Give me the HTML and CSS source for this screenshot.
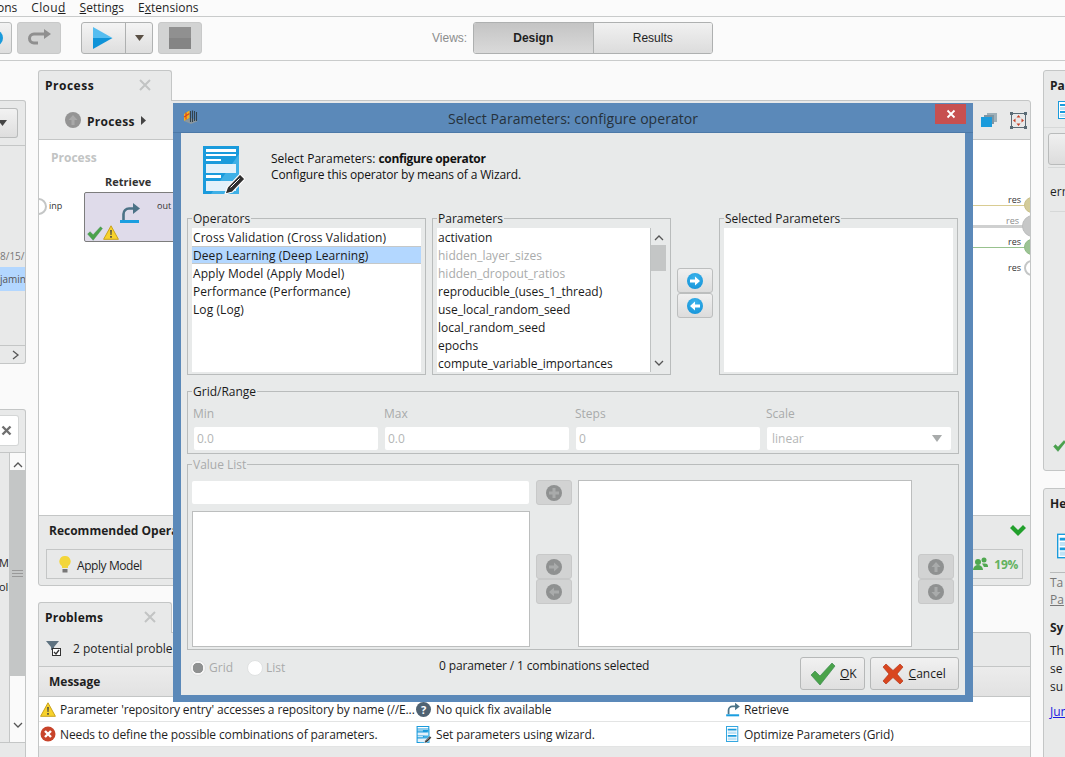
FILE: index.html
```html
<!DOCTYPE html>
<html lang="en">
<head>
<meta charset="utf-8">
<title>Select Parameters: configure operator</title>
<link rel="stylesheet" href="styles.css">
</head>
<body>
<svg class="defs" aria-hidden="true">
  <symbol id="i-retrieve" viewBox="0 0 20 22"><path d="M3.5 18V12a5.500 5.500 0 0 1 5.500-5.500H14" fill="none" stroke="#4b7286" stroke-width="2.600"/><path d="M13 1l7 5.500-7 5.500z" fill="#4b7286"/><rect x="0" y="18" width="19" height="3" fill="#1b9ee0"/></symbol>
  <symbol id="i-doc" viewBox="0 0 42 48"><rect width="36" height="48" fill="#1a9bdc"/><path d="M36 8L8 48h28z" fill="#3fb0e6"/><path d="M3 3h30v3H3zM3 8h30v2H3zM3 13h15v2H3zM3 29h15v3H3z" fill="#fff"/><path d="M3 18h30v9H3zM3 35h30v10H3z" fill="#e3f1fa"/><path d="M22 48l2.500-7L37 28l5 5-12.500 13z" fill="#2f2f2f" stroke="#fff" stroke-width="1.200"/><path d="M27.500 41.500l9-9" stroke="#fff" stroke-width="1"/></symbol>
  <symbol id="i-opt" viewBox="0 0 16 18"><rect x=".5" y=".5" width="13" height="17" fill="#fff" stroke="#1a9bdc"/><path d="M2 3h10v2H2zM2 10h10v2H2z" fill="#1a9bdc"/><path d="M2 6h10v3H2zM2 13h10v3H2z" fill="#bfe2f5"/></symbol>
  <symbol id="i-warn" viewBox="0 0 16 15"><path d="M8 .8L15.400 14.300H.6z" fill="#f7d22c" stroke="#c9a21c"/><path d="M7.200 5h1.600l-.3 5h-1zM7.200 11h1.600v1.800H7.200z" fill="#444"/></symbol>
  <symbol id="i-err" viewBox="0 0 16 16"><circle cx="8" cy="8" r="7.500" fill="#c8432a"/><path d="M5 5l6 6M11 5l-6 6" stroke="#fff" stroke-width="2.400"/></symbol>
  <symbol id="i-check" viewBox="0 0 26 24"><path d="M1 13l4-4 5 5L22 1l3 3-15 19z" fill="#4aa34a" stroke="#3c8a50" stroke-width=".7"/></symbol>
  <symbol id="i-cross" viewBox="0 0 24 24"><path d="M2 5l3-3 7 6.500L19 2l3 3-6 7 6 7-3 3-7-6.500L5 22l-3-3 6-7z" fill="#d9461f" stroke="#b5371a" stroke-width=".7"/></symbol>
  <symbol id="i-right" viewBox="0 0 16 16"><path d="M3 6.500h5V3.500l5 4.500-5 4.500V9.500H3z" fill="currentColor"/></symbol>
  <symbol id="i-left" viewBox="0 0 16 16"><path d="M13 6.500H8V3.500L3 8l5 4.500V9.500h5z" fill="currentColor"/></symbol>
  <symbol id="i-up" viewBox="0 0 16 16"><path d="M6.500 13V8H3.500L8 3l4.500 5H9.500v5z" fill="currentColor"/></symbol>
  <symbol id="i-down" viewBox="0 0 16 16"><path d="M6.500 3v5H3.500L8 13l4.500-5H9.500V3z" fill="currentColor"/></symbol>
  <symbol id="i-plus" viewBox="0 0 16 16"><path d="M6.500 3h3v3.500H13v3H9.500V13h-3V9.500H3v-3h3.500z" fill="currentColor"/></symbol>
</svg>

<div class="app">
  <nav class="menu">
    <span class="menu-first">ons</span>
    <span class="menu-cloud">Clou<u>d</u></span>
    <span class="menu-settings"><u>S</u>ettings</span>
    <span>E<u>x</u>tensions</span>
  </nav>

  <header class="toolbar">
    <div class="tbtn tbtn-cut"><span class="cut-dot"></span></div>
    <div class="tbtn tbtn-off">
      <svg width="24" height="18" viewBox="0 0 24 18"><path d="M21 5H7a4.500 4.500 0 0 0 0 9h4" fill="none" stroke="#8f8f8f" stroke-width="3"/><path d="M17 0l7 5-7 5z" fill="#8f8f8f"/></svg>
    </div>
    <div class="play">
      <div class="play-main">
        <svg width="20" height="22" viewBox="0 0 20 22"><path d="M0 0l19.500 11H0z" fill="#55bdf0"/><path d="M0 11h19.500L0 22z" fill="#0f93d8"/></svg>
      </div>
      <div class="play-more"><svg width="9" height="6" viewBox="0 0 9 6"><path d="M0 0h9L4.500 6z" fill="#5a5045"/></svg></div>
    </div>
    <div class="tbtn tbtn-off"><span class="stop"></span></div>
    <span class="views-label">Views:</span>
    <div class="seg">
      <span class="seg-item seg-active">Design</span>
      <span class="seg-item">Results</span>
    </div>
  </header>

  <main class="workspace">
    <section class="col-left">
      <div class="lp lp-top">
        <div class="lp-combo-row"><div class="lp-combo"><svg width="9" height="6" viewBox="0 0 9 6"><path d="M0 0h9L4.500 6z" fill="#444"/></svg></div></div>
        <div class="lp-tree">
          <div class="lp-date">8/15/1</div>
          <div class="lp-sel">jamin</div>
        </div>
        <div class="lp-hscroll"><svg width="8" height="10" viewBox="0 0 8 10"><path d="M1 1l5 4-5 4" fill="none" stroke="#555" stroke-width="1.300"/></svg></div>
      </div>
      <div class="lp lp-bottom">
        <div class="lp-search-row"><div class="lp-search"><svg width="11" height="11" viewBox="0 0 11 11"><path d="M1.500 1.500l8 8M9.500 1.500l-8 8" stroke="#6f6f6f" stroke-width="2.400"/></svg></div></div>
        <div class="lp-ops">
          <div class="lp-ops-text"><div class="lp-m">M)</div><div class="lp-olu">olu</div></div>
          <div class="lp-vscroll">
            <svg class="lp-arrow" width="10" height="7" viewBox="0 0 10 7"><path d="M1 6l4-4 4 4" fill="none" stroke="#555" stroke-width="1.300"/></svg>
            <div class="lp-thumb"><span class="lp-grip"></span></div>
            <svg class="lp-arrow" width="10" height="7" viewBox="0 0 10 7"><path d="M1 1l4 4 4-4" fill="none" stroke="#555" stroke-width="1.300"/></svg>
          </div>
        </div>
      </div>
    </section>

    <section class="col-center">
      <div class="tab"><span class="tab-title">Process</span><svg class="tab-x" width="12" height="12" viewBox="0 0 12 12"><path d="M1 1l10 10M11 1L1 11" stroke="#c2c4c4" stroke-width="2"/></svg></div>
      <div class="panel process">
        <div class="crumbs">
          <span class="crumb-up"><svg width="16" height="16"><use href="#i-up"/></svg></span>
          <span class="crumb-name">Process</span>
          <svg width="5" height="9" viewBox="0 0 5 9"><path d="M0 0l5 4.500L0 9z" fill="#444"/></svg>
          <span class="crumb-tools">
            <svg width="18" height="16" viewBox="0 0 18 16"><rect x="7" y="1" width="10" height="9" fill="#9fb0b8"/><rect x="4" y="3" width="10" height="9" fill="#7d95a3"/><rect x="1" y="5" width="11" height="10" fill="#1a9bdc"/></svg>
            <svg width="17" height="17" viewBox="0 0 17 17"><rect x="1.500" y="1.500" width="14" height="14" fill="none" stroke="#5a6b75"/><path d="M0 0h3v3H0zM14 0h3v3h-3zM0 14h3v3H0zM14 14h3v3h-3z" fill="#5a6b75"/><path d="M8.500 3l2 2.500h-4zM8.500 14l2-2.500h-4zM3 8.500L5.500 6.500v4zM14 8.500l-2.500-2v4z" fill="#c8432a"/></svg>
          </span>
        </div>
        <div class="canvas">
          <span class="cv-title">Process</span>
          <span class="port port-in"></span>
          <span class="cv-label cv-inp">inp</span>
          <span class="op-name">Retrieve</span>
          <div class="op">
            <svg class="op-icon" width="20" height="22"><use href="#i-retrieve"/></svg>
            <span class="op-out">out</span>
            <svg class="op-ok" width="16" height="15"><use href="#i-check"/></svg>
            <svg class="op-warn" width="16" height="15"><use href="#i-warn"/></svg>
          </div>
          <span class="wire wire-y"></span>
          <span class="wire wire-g"></span>
          <span class="wire wire-n"></span>
          <span class="sink sink-y"></span>
          <span class="sink sink-g"></span>
          <span class="sink sink-n"></span>
          <span class="sink sink-w"></span>
          <span class="cv-label res res-1">res</span>
          <span class="cv-label res res-2">res</span>
          <span class="cv-label res res-3">res</span>
          <span class="cv-label res res-4">res</span>
        </div>
        <div class="reco">
          <div class="reco-head"><span class="reco-title">Recommended Operators</span>
            <svg width="16" height="11" viewBox="0 0 16 11"><path d="M0 3l3-3 5 5 5-5 3 3-8 8z" fill="#22a02c"/></svg>
          </div>
          <div class="reco-bar">
            <svg width="12" height="17" viewBox="0 0 12 17"><path d="M6 0a5.500 5.500 0 0 1 3 10.200V12H3v-1.800A5.500 5.500 0 0 1 6 0z" fill="#f3d63a"/><rect x="3.500" y="13" width="5" height="3.500" fill="#777"/></svg>
            <span class="reco-op">Apply Model</span>
            <span class="reco-pct">
              <svg width="15" height="14" viewBox="0 0 15 14"><circle cx="5" cy="5" r="3" fill="#4fa84f"/><path d="M0 13a5 5 0 0 1 10 0z" fill="#4fa84f"/><circle cx="11" cy="3" r="2.500" fill="#4fa84f"/><path d="M9 6.500h3a3 3 0 0 1 3 3v.5h-4z" fill="#4fa84f"/></svg>
              <b>19%</b>
            </span>
          </div>
        </div>
      </div>

      <div class="tab tab-problems"><span class="tab-title">Problems</span><svg class="tab-x" width="12" height="12" viewBox="0 0 12 12"><path d="M1 1l10 10M11 1L1 11" stroke="#c2c4c4" stroke-width="2"/></svg></div>
      <div class="panel problems">
        <div class="prob-bar">
          <svg width="15" height="15" viewBox="0 0 15 15"><path d="M0 0h13L8 6v3H5V6z" fill="#5e7280"/><rect x="6.500" y="7.500" width="8" height="7" fill="#fff" stroke="#333"/><path d="M8 11l2 2 3-4" fill="none" stroke="#333" stroke-width="1.300"/></svg>
          <span>2 potential problems found</span>
        </div>
        <div class="prob-head"><b>Message</b></div>
        <div class="prob-row">
          <div class="cell cell-msg"><svg width="16" height="15"><use href="#i-warn"/></svg><span>Parameter 'repository entry' accesses a repository by name (//E...</span></div>
          <div class="cell cell-fix"><span class="help">?</span><span>No quick fix available</span></div>
          <div class="cell cell-op"><svg width="14" height="15"><use href="#i-retrieve"/></svg><span>Retrieve</span></div>
        </div>
        <div class="prob-row">
          <div class="cell cell-msg"><svg width="16" height="16"><use href="#i-err"/></svg><span>Needs to define the possible combinations of parameters.</span></div>
          <div class="cell cell-fix"><svg width="16" height="17"><use href="#i-doc"/></svg><span>Set parameters using wizard.</span></div>
          <div class="cell cell-op"><svg width="14" height="16"><use href="#i-opt"/></svg><span>Optimize Parameters (Grid)</span></div>
        </div>
      </div>
    </section>

    <section class="col-right">
      <div class="rp rp-top">
        <div class="rp-title">Pa</div>
        <div class="rp-iconrow"><svg width="18" height="18"><use href="#i-opt"/></svg></div>
        <div class="rp-btnrow"><div class="rp-btn"></div></div>
        <div class="rp-err">err</div>
        <div class="rp-fill"></div>
        <svg class="rp-check" width="13" height="12"><use href="#i-check"/></svg>
      </div>
      <div class="rp rp-bottom">
        <div class="rp-title">He</div>
        <div class="rp-iconrow rp-iconrow2"><svg width="22" height="26"><use href="#i-opt"/></svg></div>
        <div class="rp-tags"><div>Ta</div><div class="rp-under">Pa</div></div>
        <div class="rp-syn">Sy</div>
        <div class="rp-line">Th</div>
        <div class="rp-line">se</div>
        <div class="rp-line">su</div>
        <a class="rp-link">Jun</a>
      </div>
    </section>
  </main>

  <div class="dialog">
    <div class="dlg-title">
      <svg class="dlg-logo" width="16" height="16" viewBox="0 0 16 16"><path d="M8 9l7 3-7 3-7-3z" fill="#8a97a0"/><path d="M7.500 2v11M9.500 1.500v11.500M11.500 2v10M13.500 3v9" stroke="#33424c" stroke-width="1.100"/><path d="M1 5l5.500-3.500V9L1 12z" fill="#f2b21e"/><path d="M1 8l5.500-3.500M3 3.500V10.500" stroke="#d9431e" stroke-width="1.100"/></svg>
      <span class="dlg-caption">Select Parameters: configure operator</span>
      <span class="dlg-close"><svg width="10" height="10" viewBox="0 0 10 10"><path d="M1.500 1.500l7 7M8.500 1.500l-7 7" stroke="#fff" stroke-width="1.800"/></svg></span>
    </div>
    <div class="dlg-body">
      <div class="dlg-head">
        <svg width="42" height="48"><use href="#i-doc"/></svg>
        <div class="dlg-intro">
          <div>Select Parameters: <b>configure operator</b></div>
          <div class="dlg-intro-2">Configure this operator by means of a Wizard.</div>
        </div>
      </div>

      <div class="pick">
        <fieldset class="box">
          <legend>Operators</legend>
          <ul class="list list-ops">
            <li>Cross Validation (Cross Validation)</li>
            <li class="sel">Deep Learning (Deep Learning)</li>
            <li>Apply Model (Apply Model)</li>
            <li>Performance (Performance)</li>
            <li>Log (Log)</li>
          </ul>
        </fieldset>
        <fieldset class="box">
          <legend>Parameters</legend>
          <div class="list-scroll">
            <ul class="list list-params">
              <li>activation</li>
              <li class="off">hidden_layer_sizes</li>
              <li class="off">hidden_dropout_ratios</li>
              <li>reproducible_(uses_1_thread)</li>
              <li>use_local_random_seed</li>
              <li>local_random_seed</li>
              <li>epochs</li>
              <li>compute_variable_importances</li>
            </ul>
            <div class="vscroll">
              <svg width="10" height="7" viewBox="0 0 10 7"><path d="M1 6l4-4 4 4" fill="none" stroke="#555" stroke-width="1.300"/></svg>
              <div class="vtrack"><span class="vthumb"></span></div>
              <svg width="10" height="7" viewBox="0 0 10 7"><path d="M1 1l4 4 4-4" fill="none" stroke="#555" stroke-width="1.300"/></svg>
            </div>
          </div>
        </fieldset>
        <div class="move">
          <button class="rbtn" type="button"><span class="dot dot-on"><svg width="16" height="16"><use href="#i-right"/></svg></span></button>
          <button class="rbtn" type="button"><span class="dot dot-on"><svg width="16" height="16"><use href="#i-left"/></svg></span></button>
        </div>
        <fieldset class="box">
          <legend>Selected Parameters</legend>
          <ul class="list"></ul>
        </fieldset>
      </div>

      <fieldset class="box box-range">
        <legend>Grid/Range</legend>
        <div class="range">
          <label class="fld">Min<span class="inp">0.0</span></label>
          <label class="fld">Max<span class="inp">0.0</span></label>
          <label class="fld">Steps<span class="inp">0</span></label>
          <label class="fld">Scale<span class="inp inp-select">linear<svg width="10" height="7" viewBox="0 0 10 7"><path d="M0 0h10L5 7z" fill="#a8abab"/></svg></span></label>
        </div>
      </fieldset>

      <fieldset class="box box-values">
        <legend class="legend-off">Value List</legend>
        <div class="values">
          <div class="val-left"><span class="inp inp-wide"></span><div class="val-list val-list-left"></div></div>
          <div class="val-btns">
            <button class="rbtn rbtn-off" type="button"><span class="dot"><svg width="16" height="16"><use href="#i-plus"/></svg></span></button>
            <div class="val-pair val-pair-1">
              <button class="rbtn rbtn-off" type="button"><span class="dot"><svg width="16" height="16"><use href="#i-right"/></svg></span></button>
              <button class="rbtn rbtn-off" type="button"><span class="dot"><svg width="16" height="16"><use href="#i-left"/></svg></span></button>
            </div>
          </div>
          <div class="val-list"></div>
          <div class="val-btns val-btns-2">
            <button class="rbtn rbtn-off" type="button"><span class="dot"><svg width="16" height="16"><use href="#i-up"/></svg></span></button>
            <button class="rbtn rbtn-off" type="button"><span class="dot"><svg width="16" height="16"><use href="#i-down"/></svg></span></button>
          </div>
        </div>
      </fieldset>

      <div class="dlg-foot">
        <div class="radios">
          <span class="radio radio-on"></span><span class="radio-text">Grid</span>
          <span class="radio"></span><span class="radio-text">List</span>
        </div>
        <div class="count">0 parameter / 1 combinations selected</div>
        <button class="act act-ok" type="button"><svg width="26" height="24"><use href="#i-check"/></svg><span><u>O</u>K</span></button>
        <button class="act act-cancel" type="button"><svg width="24" height="24"><use href="#i-cross"/></svg><span><u>C</u>ancel</span></button>
      </div>
    </div>
  </div>
</div>
</body>
</html>
```

FILE: styles.css
```css
* { box-sizing: border-box; }
html, body { margin: 0; padding: 0; }
body {
  font-family: "Open Sans", "Liberation Sans", sans-serif;
  font-size: 12px;
  color: #1f1f1f;
  background: #fafafa;
}
svg { flex: none; }
.defs { position: absolute; width: 0; height: 0; }
.app {
  position: relative;
  width: 1065px;
  height: 757px;
  overflow: hidden;
  display: flex;
  flex-direction: column;
  background: #fafafa;
}
ul { list-style: none; margin: 0; padding: 0; }

/* menu */
.menu {
  height: 17px;
  flex: none;
  display: flex;
  gap: 14px;
  line-height: 16px;
  background: #fbfbfb;
  border-bottom: 1px solid #c9cbcb;
}
.menu-first { margin-left: -3px; }
.menu-cloud { letter-spacing: .35px; }

/* toolbar */
.toolbar {
  height: 44px;
  flex: none;
  display: flex;
  align-items: flex-start;
  padding-top: 5px;
  background: #fbfbfb;
  border-bottom: 1px solid #c9cbcb;
}
.tbtn {
  width: 44px;
  height: 32px;
  margin-right: 5px;
  display: flex;
  align-items: center;
  justify-content: center;
  border-radius: 3px;
}
.tbtn-cut {
  width: 42px;
  margin-left: -30px;
  border: 1px solid #b9bbbb;
  background: linear-gradient(#f2f2f2, #dedede);
  justify-content: flex-end;
  overflow: hidden;
}
.cut-dot { width: 16px; height: 16px; margin-right: 8px; border-radius: 50%; background: #1a9bdc; }
.tbtn-off { background: #d2d3d3; border: 1px solid #c8c9c9; }
.play {
  width: 72px;
  height: 32px;
  margin-left: 15px;
  margin-right: 5px;
  display: flex;
  border: 1px solid #b0b2b2;
  border-radius: 3px;
  background: linear-gradient(#f4f4f4, #dedede);
}
.play-main { width: 44px; display: flex; align-items: center; justify-content: center; padding-right: 1px; border-right: 1px solid #aeb0b0; }
.play-more { flex: 1; display: flex; align-items: center; justify-content: center; }
.stop { width: 22px; height: 22px; background: linear-gradient(#909090 50%, #848484 50%); }
.views-label { margin-left: 225px; width: 41px; line-height: 32px; color: #8b8d8d; font-family: "Liberation Sans", sans-serif; }
.seg { display: flex; width: 240px; height: 32px; border: 1px solid #aeb0b0; border-radius: 3px; overflow: hidden; font-family: "Liberation Sans", sans-serif; }
.seg-item { flex: 1; text-align: center; line-height: 30px; background: linear-gradient(#f1f1f1, #dcdcdc); }
.seg-active { font-weight: bold; background: linear-gradient(#c4c4c4, #dadada); border-right: 1px solid #aeb0b0; }

/* workspace */
.workspace {
  flex: 1;
  min-height: 0;
  display: grid;
  grid-template-columns: 26px 993px 40px;
  column-gap: 12px;
  padding-top: 9px;
  margin-right: -20px;
}
.col-left, .col-center, .col-right { min-width: 0; display: flex; flex-direction: column; height: 696px; }
.tab {
  position: relative;
  width: 134px;
  height: 31px;
  flex: none;
  display: flex;
  align-items: center;
  padding: 0 0 2px 6px;
  margin-bottom: -1px;
  z-index: 1;
  background: #e8e9e9;
  border: 1px solid #c4c6c6;
  border-bottom: 0;
  border-radius: 3px 3px 0 0;
}
.tab-title { font-weight: bold; font-size: 12px; color: #1a1a1a; width: 94px; letter-spacing: .5px; }
.tab-x { flex: none; }
.tab-problems { margin-top: 16px; }
.tab-problems .tab-title { width: 99px; letter-spacing: .2px; }
.panel { border: 1px solid #c4c6c6; background: #e8e9e9; }
.process { height: 486px; flex: none; display: flex; flex-direction: column; border-radius: 0 3px 3px 3px; }
.crumbs { height: 39px; flex: none; display: flex; align-items: center; gap: 6px; padding-left: 26px; border-bottom: 1px solid #c4c6c6; }
.crumb-up { width: 16px; height: 16px; border-radius: 50%; background: #949494; display: block; color: #a9a9a9; }
.crumb-up svg { display: block; }
.crumb-name { font-weight: bold; letter-spacing: .3px; padding-top: 2px; }
.crumb-tools { margin-left: auto; margin-right: 3px; display: flex; align-items: center; gap: 12px; }
.canvas { position: relative; flex: 1; background: #fff; overflow: hidden; }
.cv-title { position: absolute; left: 12px; top: 10px; font-weight: bold; color: #c2c4c4; line-height: 16px; }
.port-in { position: absolute; left: -9px; top: 58px; width: 17px; height: 17px; border-radius: 50%; background: #fff; border: 2px solid #c4c6c6; }
.cv-label { position: absolute; font-size: 9px; line-height: 12px; color: #333; }
.cv-inp { left: 10px; top: 60px; }
.op-name { position: absolute; left: 66px; top: 34px; font-weight: bold; font-size: 11px; line-height: 16px; color: #333; }
.op { position: absolute; left: 45px; top: 52px; width: 100px; height: 50px; background: #dfdbea; border: 1px solid #7d7d7d; border-radius: 2px; }
.op-icon { position: absolute; left: 35px; top: 9px; }
.op-out { position: absolute; left: 72px; top: 7px; font-size: 9px; line-height: 12px; color: #333; }
.op-ok { position: absolute; left: 2px; top: 33px; }
.op-warn { position: absolute; left: 18px; top: 32px; }
.wire { position: absolute; left: 900px; width: 90px; height: 1px; }
.wire-y { top: 65px; background: #d9cc92; }
.wire-g { top: 85px; height: 3px; background: #cfd0d0; }
.wire-n { top: 107px; background: #98c28e; }
.sink { position: absolute; border-radius: 50%; }
.sink-y { left: 985px; top: 57px; width: 16px; height: 16px; background: #d3cc9b; border: 1px solid #c9c08a; }
.sink-g { left: 983px; top: 75px; width: 22px; height: 22px; background: #c6c7c7; border: 1px solid #bcbdbd; }
.sink-n { left: 985px; top: 99px; width: 16px; height: 16px; background: #9cc394; border: 1px solid #8fbb86; }
.sink-w { left: 985px; top: 120px; width: 16px; height: 16px; background: #fff; border: 2px solid #c4c6c6; }
.res-1 { left: 969px; top: 54px; }
.res-2 { left: 967px; top: 75px; color: #8b8d8d; }
.res-3 { left: 969px; top: 96px; }
.res-4 { left: 969px; top: 122px; }
.reco { height: 70px; flex: none; padding: 0 7px; border-top: 1px solid #c4c6c6; }
.reco-head { height: 33px; display: flex; align-items: center; justify-content: space-between; padding: 0 0 5px 3px; }
.reco-head svg { margin-right: -3px; }
.reco-title { font-weight: bold; }
.reco-bar { height: 30px; display: flex; align-items: center; padding: 0 4px 0 12px; border: 1px solid #c4c6c6; }
.reco-op { margin-left: 6px; letter-spacing: -.42px; padding-top: 2px; }
.reco-pct { margin-left: auto; display: flex; align-items: center; gap: 6px; color: #63b25f; }
.reco-pct b { letter-spacing: -.3px; }

/* problems */
.problems { flex: 1; min-height: 0; border-radius: 0 3px 0 0; }
.prob-bar { height: 33px; display: flex; align-items: center; gap: 12px; padding: 0 0 2px 7px; }
.prob-head { height: 31px; line-height: 30px; padding-left: 10px; background: linear-gradient(#ececec, #e2e2e2); border-top: 1px solid #c4c6c6; border-bottom: 1px solid #c4c6c6; }
.prob-row { height: 25px; display: flex; align-items: center; background: #fff; border-bottom: 1px solid #e3e4e4; letter-spacing: -.12px; }
.cell { display: flex; align-items: center; gap: 4px; white-space: nowrap; overflow: hidden; }
.cell-msg { width: 377px; padding-left: 1px; }
.cell-fix { width: 310px; }
.help { width: 15px; height: 15px; margin-right: 1px; border-radius: 50%; background: #4f6272; color: #fff; font-weight: bold; font-size: 11px; line-height: 15px; text-align: center; flex: none; }

/* left column */
.col-left { overflow: hidden; }
.lp { border: 1px solid #c4c6c6; border-left: 0; background: #e8e9e9; border-radius: 0 3px 3px 0; }
.lp-top { height: 264px; margin-top: 30px; flex: none; display: flex; flex-direction: column; }
.lp-combo-row { height: 45px; flex: none; padding-top: 7px; border-bottom: 1px solid #c4c6c6; }
.lp-combo { width: 18px; height: 30px; display: flex; align-items: center; justify-content: flex-end; padding-right: 10px; border: 1px solid #b9bbbb; border-left: 0; border-radius: 0 3px 3px 0; background: linear-gradient(#f2f2f2, #dedede); }
.lp-tree { flex: 1; padding-top: 101px; font-size: 10px; overflow: hidden; white-space: nowrap; }
.lp-date { height: 20px; line-height: 18px; color: #777; }
.lp-sel { height: 24px; line-height: 24px; background: #b3d7ff; color: #555; }
.lp-hscroll { height: 18px; flex: none; display: flex; align-items: center; justify-content: flex-end; padding-right: 5px; border-top: 1px solid #c4c6c6; }
.lp-bottom { margin-top: 45px; flex: 1; min-height: 0; display: flex; flex-direction: column; }
.lp-search-row { height: 43px; flex: none; padding-top: 5px; border-bottom: 1px solid #c4c6c6; }
.lp-search { width: 19px; height: 31px; display: flex; align-items: center; justify-content: flex-end; padding-right: 6px; background: #fff; border: 1px solid #d4d6d6; border-left: 0; border-radius: 0 3px 3px 0; }
.lp-ops { height: 290px; display: flex; border-bottom: 1px solid #c4c6c6; }
.lp-ops-text { width: 10px; flex: none; overflow: hidden; padding-top: 98px; font-size: 11px; line-height: 24px; text-indent: -1px; white-space: nowrap; border-right: 1px solid #c4c6c6; }
.lp-vscroll { flex: 1; display: flex; flex-direction: column; align-items: center; padding-top: 8px; background: #fafafa; gap: 2px; }
.lp-thumb { align-self: stretch; height: 206px; flex: none; background: #c4c6c6; display: flex; align-items: center; justify-content: center; }
.lp-grip { width: 11px; height: 7px; border-top: 1px solid #999; border-bottom: 1px solid #999; background: linear-gradient(#c4c6c6 40%, #999 40%, #999 60%, #c4c6c6 60%); }
.lp-vscroll .lp-arrow:last-child { margin-top: 44px; }

/* right column */
.col-right { overflow: hidden; }
.rp { background: #e8e9e9; border: 1px solid #c4c6c6; border-radius: 3px 0 0 3px; padding-left: 6px; }
.rp-top { height: 401px; flex: none; display: flex; flex-direction: column; }
.rp-title { font-weight: bold; line-height: 16px; padding-top: 7px; height: 30px; }
.rp-iconrow { height: 27px; margin-left: -6px; padding-left: 13px; border-bottom: 1px solid #d6d8d8; }
.rp-iconrow svg { display: block; }
.rp-btnrow { height: 40px; padding-top: 5px; margin-left: -2px; border-bottom: 1px solid #d6d8d8; }
.rp-btn { width: 40px; height: 32px; border: 1px solid #b9bbbb; border-radius: 3px; background: linear-gradient(#f0f0f0, #dcdcdc); }
.rp-err { height: 44px; line-height: 48px; border-bottom: 1px solid #d6d8d8; }
.rp-fill { flex: 1; }
.rp-check { margin: 0 0 18px 3px; flex: none; }
.rp-bottom { margin-top: 17px; flex: 1; min-height: 0; }
.rp-iconrow2 { height: 54px; padding-top: 14px; margin-left: 0; padding-left: 7px; border-bottom: 1px solid #b9bbbb; }
.rp-tags { color: #777; line-height: 17px; padding-top: 1px; }
.rp-under { text-decoration: underline; }
.rp-syn { font-weight: bold; margin-top: 11px; line-height: 18px; }
.rp-line { line-height: 18px; }
.rp-syn + .rp-line { margin-top: 5px; }
.rp-link { display: block; margin-top: 7px; color: #1a1ae0; text-decoration: underline; line-height: 18px; }

/* dialog */
.dialog {
  position: absolute;
  left: 173px;
  top: 103px;
  width: 800px;
  height: 599px;
  display: flex;
  flex-direction: column;
  padding: 0 8px 7px;
  background: #5b89b9;
  z-index: 5;
}
.dlg-title { position: relative; height: 30px; flex: none; display: flex; justify-content: center; align-items: center; border-bottom: 1px solid #4c79a8; margin: 0 -8px; padding: 0 8px; }
.dlg-logo { position: absolute; left: 10px; top: 6px; }
.dlg-caption { font-size: 14px; color: #26323c; margin-top: 1px; letter-spacing: .05px; }
.dlg-close { position: absolute; right: 7px; top: 1px; width: 31px; height: 20px; background: #c75050; display: flex; align-items: center; justify-content: center; }
.dlg-body { flex: 1; min-height: 0; display: flex; flex-direction: column; padding: 0 6px; background: #e8eaea; }
.dlg-head { height: 77px; flex: none; display: flex; gap: 26px; padding: 13px 0 0 16px; }
.dlg-intro { padding-top: 5px; line-height: 16px; color: #111; }
.dlg-intro b { letter-spacing: -.33px; }
.dlg-intro-2 { letter-spacing: -.155px; }

.box { margin: 0; padding: 2px 4px; min-width: 0; border: 1px solid #b9bcbc; }
.box legend { padding: 0 1px; height: 16px; line-height: 18px; color: #1a1a1a; white-space: nowrap; }
.box .legend-off { color: #a9abab; }
.pick { display: grid; grid-template-columns: 239px 239px 36px 239px; gap: 6px; flex: none; }
.list { height: 144px; background: #fff; overflow: hidden; }
.list li { height: 18px; line-height: 20px; padding-left: 1px; white-space: nowrap; color: #1a1a1a; }
.list-ops li { letter-spacing: .08px; }
.list .sel { background: #b3d7ff; border-top: 1px solid #c5c8c8; border-bottom: 1px solid #c5c8c8; line-height: 18px; }
.list .off { color: #a9abab; }
.list-scroll { display: flex; }
.list-params { flex: 1; min-width: 0; }
.vscroll { width: 16px; flex: none; height: 144px; display: flex; flex-direction: column; align-items: center; justify-content: space-between; padding: 6px 0 5px; border-left: 1px solid #bfc2c2; }
.vtrack { flex: 1; align-self: stretch; padding-top: 4px; }
.vthumb { display: block; height: 26px; background: #c4c6c6; }
.move { padding-top: 58px; }
.rbtn { display: flex; align-items: center; justify-content: center; width: 36px; height: 25px; padding: 0; border: 1px solid #bcbebe; border-radius: 3px; background: linear-gradient(#f0f0f0, #dcdcdc); }
.dot { width: 16px; height: 16px; display: block; border-radius: 50%; background: #8f9191; color: #a9abab; }
.dot svg { display: block; }
.dot-on { background: radial-gradient(circle at 50% 30%, #3db4ec, #0f8fd6); color: #fff; }
.rbtn-off { background: #d2d3d3; border-color: #c8c9c9; }

.box-range { margin-top: 8px; width: 772px; flex: none; padding-bottom: 3px; }
.range { display: grid; grid-template-columns: repeat(4, 184px); gap: 7px; margin-left: 2px; padding-top: 5px; }
.fld { display: flex; flex-direction: column; gap: 5px; color: #a9abab; line-height: 16px; text-indent: -1px; }
.inp { display: flex; align-items: center; justify-content: space-between; height: 23px; padding: 0 4px 0 3px; background: #fff; border-radius: 2px; color: #b4b6b6; line-height: 23px; text-indent: 0; }
.inp-select { padding: 0 9px 0 5px; }
.box-values { margin-top: 2px; width: 772px; flex: none; }
.values { display: grid; grid-template-columns: 338px 36px 334px 36px; gap: 6px; padding-top: 6px; }
.val-left { display: flex; flex-direction: column; gap: 7px; height: 167px; padding-top: 1px; }
.inp-wide { flex: none; margin: 0 1px 0 0; }
.val-list { height: 167px; background: #fff; border: 1px solid #bcbebe; }
.val-list-left { height: auto; flex: 1; }
.val-pair-1 { margin-top: 49px; }
.val-btns-2 { padding-top: 74px; }

.dlg-foot { flex: 1; display: flex; align-items: flex-start; position: relative; }
.radios { width: 252px; flex: none; display: flex; align-items: center; padding: 9px 0 0 3px; color: #a9abab; }
.radio { width: 16px; height: 16px; border-radius: 50%; background: #fff; border: 1px solid #e0e2e2; flex: none; }
.radio-on { background: radial-gradient(circle, #8f9191 0 5px, #f4f4f4 5.500px); }
.radio-text { margin: 0 14px 0 3px; }
.count { width: 361px; flex: none; padding-top: 8px; line-height: 16px; color: #1a1a1a; letter-spacing: -.14px; }
.act { height: 33px; margin-top: 7px; display: flex; align-items: center; padding: 0; border: 1px solid #b6b8b8; border-radius: 3px; background: linear-gradient(#f1f1f1, #dfdfdf); font: inherit; color: #1a1a1a; }
.act-ok { width: 65px; gap: 4px; padding-left: 9px; margin-right: 5px; }
.act-cancel { width: 90px; gap: 4px; padding-left: 10px; }
```
